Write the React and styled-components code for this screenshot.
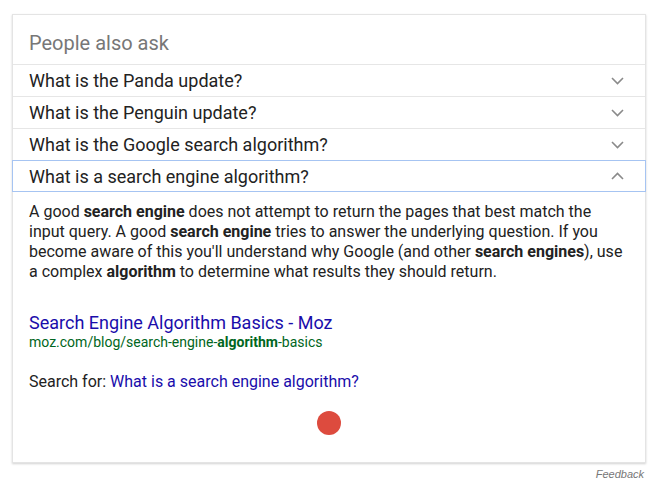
import React, { useState } from "react";
import styled, { createGlobalStyle } from "styled-components";

//======================================================
const GlobalStyle = createGlobalStyle`
     body {
          margin: 0;
          background: #fff;
          font-family: Roboto, "Liberation Sans", Arial, sans-serif;
     }
`;
//======================================================
const Page = styled.div`
     width: 634px;
     padding: 14px 0 0 12px;
`;

const Card = styled.div`
     border: 1px solid #e4e4e4;
     box-shadow: 0 1px 2px rgba(0, 0, 0, 0.18);
     background: #fff;
`;

const Header = styled.div`
     height: 49px;
     display: flex;
     align-items: flex-end;
     padding: 0 16px 9px;
     box-sizing: border-box;
     font-size: 20px;
     line-height: 24px;
     color: #777;
`;

const Row = styled.div`
     height: 32px;
     box-sizing: border-box;
     display: flex;
     align-items: center;
     justify-content: space-between;
     padding: 0 21px 0 16px;
     font-size: 18px;
     color: #222;
     border-top: 1px solid ${(p) => (p.open ? "#a6c4f2" : "#e6e6e6")};
     border-bottom: ${(p) => (p.open ? "1px solid #a6c4f2" : "none")};
     border-left: ${(p) => (p.open ? "1px solid #a6c4f2" : "none")};
     border-right: ${(p) => (p.open ? "1px solid #a6c4f2" : "none")};
     margin: ${(p) => (p.open ? "0 -1px" : "0")};
     cursor: pointer;
`;

const Answer = styled.div`
     padding: 10px 16px 27px;
     font-size: 16px;
     line-height: 20px;
     color: #222;
`;

const Para = styled.p`
     margin: 0;
`;

const Result = styled.div`
     margin-top: 30px;
`;

const Title = styled.a`
     display: block;
     font-size: 18px;
     line-height: 22px;
     color: #1a0dab;
     text-decoration: none;
`;

const Url = styled.div`
     font-size: 14px;
     line-height: 16px;
     color: #006621;
`;

const SearchFor = styled.div`
     margin-top: 22px;
     font-size: 16px;
     line-height: 20px;
     color: #222;
     a {
          color: #1a0dab;
          text-decoration: none;
     }
`;

const DotRow = styled.div`
     display: flex;
     justify-content: center;
     margin-top: 19px;
`;

const Dot = styled.div`
     width: 24px;
     height: 24px;
     border-radius: 50%;
     background: #dd4b3e;
`;

const Feedback = styled.div`
     text-align: right;
     font-family: Arial, "Liberation Sans", sans-serif;
     font-style: italic;
     font-size: 11px;
     color: #777;
     padding: 5px 2px 0 0;
`;
//======================================================
const Chevron = ({ up }) => (
     <svg width="13" height="8" viewBox="0 0 13 8">
          <path
               d={up ? "M1 7 L6.5 1.5 L12 7" : "M1 1 L6.5 6.5 L12 1"}
               fill="none"
               stroke="#8a8a8a"
               strokeWidth="1.6"
          />
     </svg>
);

const questions = [
     "What is the Panda update?",
     "What is the Penguin update?",
     "What is the Google search algorithm?",
     "What is a search engine algorithm?",
];

const App = () => {
     const [open, setOpen] = useState(3);

     return (
          <>
               <GlobalStyle />
               <Page>
                    <Card>
                         <Header>People also ask</Header>
                         {questions.map((q, i) => (
                              <Row key={q} open={i === open} onClick={() => setOpen(i === open ? -1 : i)}>
                                   <span>{q}</span>
                                   <Chevron up={i === open} />
                              </Row>
                         ))}
                         {open === 3 && (
                              <Answer>
                                   <Para>
                                        A good <b>search engine</b> does not attempt to return the pages that best match the
                                        input query. A good <b>search engine</b> tries to answer the underlying question. If you
                                        become aware of this you'll understand why Google (and other <b>search engines</b>), use
                                        a complex <b>algorithm</b> to determine what results they should return.
                                   </Para>
                                   <Result>
                                        <Title href="#">Search Engine Algorithm Basics - Moz</Title>
                                        <Url>
                                             moz.com/blog/search-engine-<b>algorithm</b>-basics
                                        </Url>
                                   </Result>
                                   <SearchFor>
                                        Search for: <a href="#">What is a search engine algorithm?</a>
                                   </SearchFor>
                                   <DotRow>
                                        <Dot />
                                   </DotRow>
                              </Answer>
                         )}
                    </Card>
                    <Feedback>Feedback</Feedback>
               </Page>
          </>
     );
};

export default App;
